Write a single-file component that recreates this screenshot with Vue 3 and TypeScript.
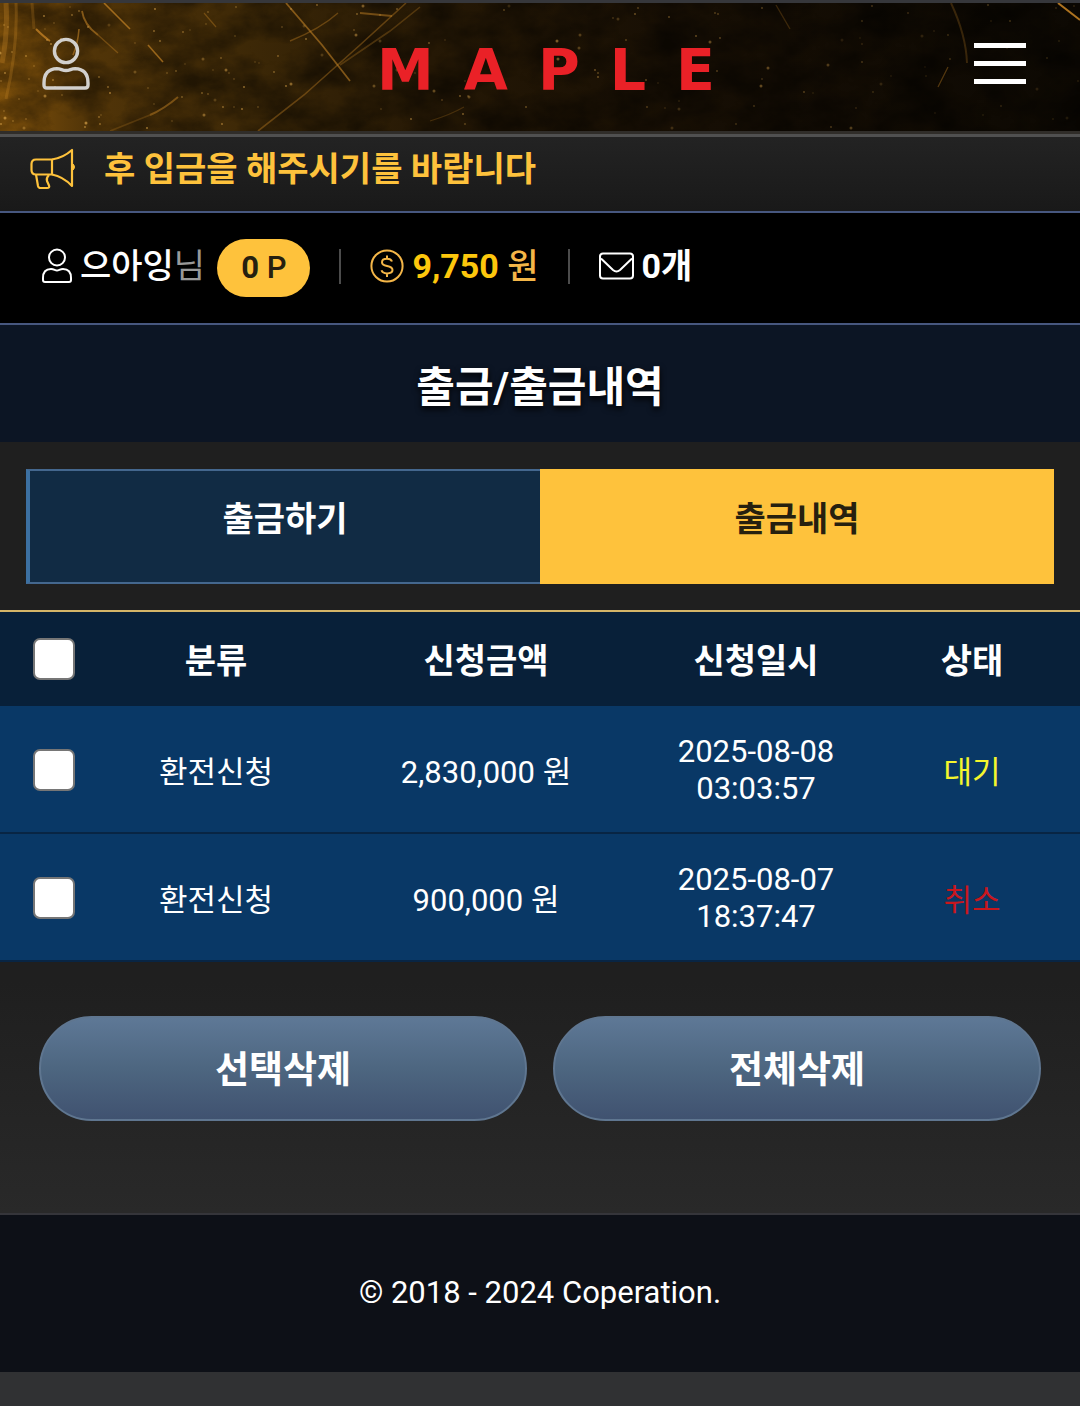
<script setup lang="ts">
import { computed, ref } from 'vue'

interface Withdrawal {
  id: number
  kind: string
  amount: string
  date: string
  time: string
  status: string
  tone: 'waiting' | 'cancelled'
}

interface Speck {
  x: number
  y: number
  r: number
  o: number
}

const rows: Withdrawal[] = [
  { id: 1, kind: '환전신청', amount: '2,830,000 원', date: '2025-08-08', time: '03:03:57', status: '대기', tone: 'waiting' },
  { id: 2, kind: '환전신청', amount: '900,000 원', date: '2025-08-07', time: '18:37:47', status: '취소', tone: 'cancelled' },
]

const selected = ref<number[]>([])
const allSelected = computed({
  get: () => selected.value.length === rows.length,
  set: (on: boolean) => {
    selected.value = on ? rows.map((r) => r.id) : []
  },
})

const brand = ['M', 'A', 'P', 'L', 'E']

// Gold dust, denser and brighter towards the left of the banner
function makeDust(count: number): Speck[] {
  let seed = 41
  const next = (): number => {
    seed = (seed * 16807) % 2147483647
    return seed / 2147483647
  }
  return Array.from({ length: count }, () => {
    const x = Math.pow(next(), 1.4) * 1080
    return {
      x: Math.round(x),
      y: Math.round(next() * 128),
      r: next() > 0.8 ? 1.5 : 0.9,
      o: (0.2 + next() * 0.55) * (1 - x / 1700),
    }
  })
}
const dust = makeDust(190)

const scratches: { d: string; o: number; w: number }[] = [
  { d: 'M104 0 L130 26', o: 0.75, w: 1.6 },
  { d: 'M148 42 L163 59', o: 0.7, w: 1.6 },
  { d: 'M82 8 Q84 22 98 32', o: 0.6, w: 1.8 },
  { d: 'M98 32 L118 50', o: 0.4, w: 1.4 },
  { d: 'M79 26 Q78 40 73 52', o: 0.6, w: 1.6 },
  { d: 'M286 0 L322 42 L350 78', o: 0.6, w: 1.8 },
  { d: 'M258 128 L304 92 L360 42 L406 0', o: 0.4, w: 1.6 },
  { d: 'M290 38 Q320 26 338 10', o: 0.4, w: 1.4 },
  { d: 'M110 128 L150 112', o: 0.25, w: 1.8 },
  { d: 'M150 112 Q164 106 178 94', o: 0.5, w: 2 },
  { d: 'M360 10 L392 13', o: 0.5, w: 1.8 },
  { d: 'M340 62 L390 28 L420 4', o: 0.3, w: 1.6 },
  { d: 'M430 118 Q450 112 464 104', o: 0.25, w: 1.2 },
  { d: 'M16 0 Q18 44 6 96', o: 0.3, w: 3 },
  { d: 'M6 0 Q8 30 2 60', o: 0.35, w: 5 },
  { d: 'M32 0 L34 26', o: 0.25, w: 3 },
  { d: 'M36 26 Q44 34 50 38', o: 0.8, w: 2 },
  { d: 'M776 2 L790 26', o: 0.25, w: 1.4 },
  { d: 'M951 0 Q966 32 967 60', o: 0.25, w: 2 },
  { d: 'M1058 0 L1080 17', o: 0.9, w: 2 },
  { d: 'M938 84 L948 64', o: 0.4, w: 1.2 },
  { d: 'M204 10 L216 24', o: 0.4, w: 1.2 },
]
</script>

<template>
  <div class="page">
    <header class="banner">
      <svg class="banner-art" viewBox="0 0 1080 128" preserveAspectRatio="none" aria-hidden="true">
        <defs>
          <linearGradient id="gold" x1="0" x2="1" y1="0" y2="0">
            <stop offset="0" stop-color="#84540b" />
            <stop offset="0.08" stop-color="#523508" />
            <stop offset="0.22" stop-color="#3e2907" />
            <stop offset="0.4" stop-color="#251805" />
            <stop offset="0.65" stop-color="#160e04" />
            <stop offset="1" stop-color="#0d0903" />
          </linearGradient>
          <filter id="grain" x="0" y="0" width="100%" height="100%">
            <feTurbulence type="fractalNoise" baseFrequency="0.02 0.03" numOctaves="6" seed="8" />
            <feColorMatrix values="0 0 0 0 0  0 0 0 0 0  0 0 0 0 0  2 0 0 0 -0.6" />
          </filter>
        </defs>
        <rect width="1080" height="128" fill="url(#gold)" />
        <rect width="1080" height="128" filter="url(#grain)" opacity="0.5" />
        <path
          v-for="(s, i) in scratches"
          :key="'s' + i"
          :d="s.d"
          fill="none"
          stroke="#c08024"
          :stroke-width="s.w"
          :opacity="s.o"
        />
        <circle v-for="(p, i) in dust" :key="'d' + i" :cx="p.x" :cy="p.y" :r="p.r" fill="#dca64c" :opacity="p.o" />
      </svg>
      <button class="icon-button account" type="button" aria-label="내 정보">
        <svg width="48" height="54" viewBox="0 0 48 54" fill="none" stroke="currentColor" stroke-width="3.4">
          <circle cx="24" cy="14" r="11.6" />
          <path d="M5 51 Q2 51 2 48 V46 Q2 32 15 31.600 C19 31.600 20 33.500 24 33.500 C28 33.500 29 31.600 33 31.600 Q46 32 46 46 V48 Q46 51 43 51 Z" />
        </svg>
      </button>
      <a class="brand" href="#" aria-label="MAPLE">
        <span v-for="letter in brand" :key="letter">{{ letter }}</span>
      </a>
      <button class="icon-button menu" type="button" aria-label="메뉴">
        <span></span><span></span><span></span>
      </button>
    </header>

    <div class="notice">
      <svg width="46" height="42" viewBox="0 0 46 42" fill="none" stroke="currentColor" stroke-width="2.200" stroke-linejoin="round">
        <path d="M22 11.500 H6 Q1.500 11.500 1.500 16 V22 Q1.500 26.500 6 26.500 H22 Z" />
        <path d="M22 11.500 Q33 10 42 2 V38 Q33 28.500 22 26.500" />
        <path d="M42 15 Q47 19 42 23 Z" fill="currentColor" stroke-width="1" />
        <path d="M6 26.500 L8 38 Q8.500 40 10.500 40 H17 Q20 40 19 37.500 L17 33 Q16 30 19 27" />
      </svg>
      <p>후 입금을 해주시기를 바랍니다</p>
    </div>

    <section class="account-bar">
      <div class="member">
        <svg width="30" height="36" viewBox="0 0 30 36" fill="none" stroke="currentColor" stroke-width="2">
          <circle cx="15" cy="9.500" r="8" />
          <path d="M3 34 Q1 34 1 32 V30 Q1 21 9 21 C12 21 13 22.500 15 22.500 C17 22.500 18 21 21 21 Q29 21 29 30 V32 Q29 34 27 34 Z" />
        </svg>
        <span class="name">으아잉<span class="suffix">님</span></span>
        <span class="points"><b>0</b> P</span>
      </div>
      <div class="cash">
        <svg width="34" height="34" viewBox="0 0 34 34" fill="none" stroke="currentColor" stroke-width="2">
          <circle cx="17" cy="17" r="15.600" />
          <path d="M22 12.500 Q21 9.800 17 9.800 Q12 9.800 12 13.200 Q12 16 17 17 Q22.500 18 22.500 21 Q22.500 24.400 17 24.400 Q12.500 24.400 11.500 21.300 M17 6.500 V10 M17 24 V28" />
        </svg>
        <span><b>9,750</b> 원</span>
      </div>
      <a class="mail" href="#">
        <svg width="35" height="28" viewBox="0 0 35 28" fill="none" stroke="currentColor" stroke-width="2" stroke-linejoin="round">
          <rect x="1" y="1.500" width="33" height="25" rx="3" />
          <path d="M2 6.500 L14 18 Q17.500 21 21 18 L33 6.500" />
        </svg>
        <b>0개</b>
      </a>
    </section>

    <h1 class="title">출금/출금내역</h1>

    <main class="content">
      <nav class="tabs">
        <a href="#">출금하기</a>
        <a href="#" class="active" aria-current="page">출금내역</a>
      </nav>

      <table class="history">
        <colgroup>
          <col class="narrow" />
          <col />
          <col class="wide" />
          <col />
          <col />
        </colgroup>
        <thead>
          <tr>
            <th><input v-model="allSelected" type="checkbox" aria-label="전체 선택" /></th>
            <th class="text">분류</th>
            <th class="text">신청금액</th>
            <th class="text">신청일시</th>
            <th class="text">상태</th>
          </tr>
        </thead>
        <tbody>
          <tr v-for="row in rows" :key="row.id">
            <td><input v-model="selected" type="checkbox" :value="row.id" :aria-label="row.date + ' 선택'" /></td>
            <td class="text">{{ row.kind }}</td>
            <td class="text">{{ row.amount }}</td>
            <td>{{ row.date }}<br />{{ row.time }}</td>
            <td class="text" :class="row.tone">{{ row.status }}</td>
          </tr>
        </tbody>
      </table>

      <div class="actions">
        <button type="button">선택삭제</button>
        <button type="button">전체삭제</button>
      </div>
    </main>

    <footer class="footer">© 2018 - 2024 Coperation.</footer>
  </div>
</template>

<style>
body {
  margin: 0;
  background: #303133;
}
</style>

<style scoped>
.page {
  font-family: Roboto, 'Noto Sans CJK KR', sans-serif;
  font-size: 34px;
  line-height: 40px;
  color: #fff;
  border-top: 3px solid #36373b;
}

.page * {
  box-sizing: border-box;
}

a {
  color: inherit;
  text-decoration: none;
}

button {
  font: inherit;
  color: inherit;
  cursor: pointer;
}

svg {
  display: block;
  flex: none;
}

.banner {
  position: relative;
  display: flex;
  align-items: center;
  justify-content: space-between;
  height: 134px;
  padding: 0 54px 10px 42px;
  border-bottom: 3px solid #505050;
  background: #302d29;
}

.banner-art {
  position: absolute;
  inset: 0;
  width: 100%;
  height: 128px;
}

.icon-button {
  position: relative;
  display: flex;
  padding: 0;
  border: 0;
  background: none;
}

.account {
  color: #d2d0cd;
}

.menu {
  flex-direction: column;
  gap: 13px;
  width: 52px;
}

.menu span {
  width: 100%;
  height: 5px;
  background: #fff;
}

.brand {
  position: relative;
  display: flex;
  justify-content: space-between;
  width: 338px;
  padding-top: 12px;
  margin-left: 28px;
  font-family: 'DejaVu Sans', sans-serif;
  font-size: 57px;
  font-weight: 700;
  line-height: 64px;
  color: #ea2127;
}

.notice {
  display: flex;
  align-items: center;
  gap: 28px;
  height: 74px;
  padding: 0 30px 10px;
  background: linear-gradient(#232323, #191919);
  color: #fec23c;
  font-weight: 700;
}

.notice p {
  margin: 0;
}

.account-bar {
  display: flex;
  align-items: center;
  height: 114px;
  padding: 0 42px 4px;
  border: solid #47577f;
  border-width: 2px 0;
  background: #000;
}

.account-bar > div,
.account-bar > a {
  display: flex;
  align-items: center;
  gap: 8px;
  white-space: nowrap;
}

.cash::before,
.mail::before {
  content: '';
  width: 2px;
  height: 35px;
  margin: 0 21px 0 29px;
  background: #4c4c4c;
}

.name {
  font-weight: 500;
}

.suffix {
  font-weight: 400;
  color: #999;
}

.points {
  margin: 4px 0 0 4px;
  padding: 9px 24px;
  border-radius: 29px;
  background: #fec23c;
  color: #26200f;
  font-size: 31px;
  font-weight: 500;
}

.cash {
  color: #f4b648;
  font-weight: 500;
}

.cash b {
  color: #fdc70c;
}

.title {
  margin: 0;
  padding: 39px 0 30px;
  background: #0c1524;
  font-size: 42px;
  line-height: 48px;
  font-weight: 700;
  text-align: center;
  text-shadow: 0 3px 6px #000;
}

.content {
  padding-top: 27px;
  border-bottom: 2px solid #35353a;
  background: linear-gradient(#1f1f1f 70%, #292929);
}

.tabs {
  display: flex;
  margin: 0 26px 26px;
  font-weight: 700;
  text-align: center;
}

.tabs a {
  flex: 1;
  padding: 28px 0 43px;
  border: 2px solid #44678e;
  border-left: 4px solid #3c70a1;
  border-right: 0;
  background: #112b44;
}

.tabs .active {
  border: 2px solid #fec23c;
  background: #fec23c;
  color: #26200f;
}

.history {
  width: 100%;
  table-layout: fixed;
  border-collapse: separate;
  border-spacing: 0;
  border-top: 2px solid #d5b568;
  text-align: center;
}

.history col {
  width: 20%;
}

.history .narrow {
  width: 10%;
}

.history .wide {
  width: 30%;
}

.history th {
  height: 94px;
  padding: 0;
  background: #082039;
  font-weight: 700;
}

.history th.text {
  padding-top: 4px;
}

.history td {
  padding: 27px 0 25px;
  border-bottom: 2px solid #082544;
  background: #093866;
  font-size: 31px;
  line-height: 37px;
}

.history td.text {
  padding-top: 31px;
}

.history .waiting {
  color: #f4f52d;
}

.history .cancelled {
  color: #c8171e;
}

.history input {
  display: block;
  appearance: none;
  width: 42px;
  height: 42px;
  margin: 0 auto;
  border: 2px solid #767676;
  border-radius: 7px;
  background: #fff;
}

.history input:checked {
  background: #fec23c;
}

.actions {
  display: flex;
  gap: 26px;
  padding: 54px 39px 92px;
}

.actions button {
  flex: 1;
  height: 105px;
  padding: 5px 0 0;
  border: 2px solid #5f7690;
  border-radius: 53px;
  background: linear-gradient(#5e7896, #4d6680 50%, #405270);
  font-size: 37px;
  font-weight: 700;
}

.footer {
  padding: 58px 20px 59px;
  background: #0d1017;
  font-size: 31px;
  text-align: center;
}
</style>
